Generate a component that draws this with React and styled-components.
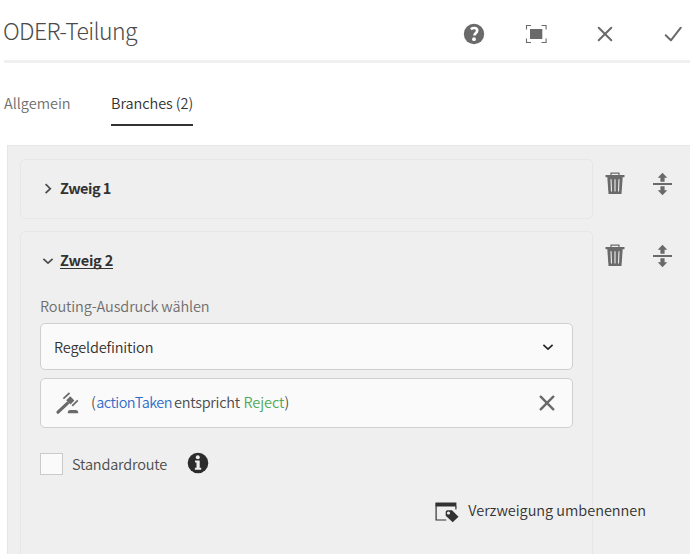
import React from "react";
import styled, { createGlobalStyle } from "styled-components";

const Global = createGlobalStyle`
  *, *::before, *::after { box-sizing: border-box; }
  html, body { margin: 0; background: #fff; overflow: hidden; }
  button { font: inherit; color: inherit; background: none; border: 0; padding: 0; }
  svg { display: block; flex: none; }
`;

const Page = styled.main`
  width: 690px;
  height: 554px;
  overflow: hidden;
  display: flex;
  flex-direction: column;
  font: 350 14.5px/20px "Noto Sans CJK SC", "Open Sans", sans-serif;
  color: #4b4b4b;
`;

/* A single line of text with its own tracking. */
const Label = styled.span`
  display: block;
  white-space: nowrap;
  letter-spacing: ${(p) => p.$track || 0}px;
`;

const Header = styled.header`
  flex: none;
  height: 63px;
  margin-left: 4px;
  border-bottom: 3px solid #f0f0f0;
  display: flex;
  align-items: center;
  justify-content: space-between;
`;

const Title = styled.h1`
  margin: 0 0 0 -1px;
  padding-bottom: 1px;
  font-size: 23px;
  line-height: 32px;
  font-weight: 300;
  color: #4b4b4b;
  white-space: nowrap;
  letter-spacing: -0.58px;
`;

const Actions = styled.div`
  display: flex;
  align-items: center;
  padding: 8px 5px 0 0;
  color: #6a6a6a;
`;

const ActionButton = styled.button`
  width: 24px;
  height: 24px;
  margin-left: ${(p) => p.$gap || 0}px;
`;

const Tabs = styled.nav`
  flex: none;
  display: flex;
  gap: 41px;
  height: 82px;
  padding: 30px 0 0 4px;
`;

const Tab = styled.button`
  width: ${(p) => p.$width}px;
  height: 33px;
  display: flex;
  align-items: flex-start;
  color: ${(p) => (p.$active ? "#323232" : "#6e6e6e")};
  border-bottom: 2px solid ${(p) => (p.$active ? "#323232" : "transparent")};
`;

const Panel = styled.section`
  flex: 1;
  margin-left: 7px;
  padding: 13px 0 0 12px;
  border: solid #e6e6e6;
  border-width: 1px 0 0 1px;
  background: #efefef;
  display: flex;
  flex-direction: column;
  gap: 12px;
`;

const BranchRow = styled.div`
  flex: ${(p) => (p.$open ? "1" : "none")};
  display: flex;
`;

const Card = styled.article`
  width: 573px;
  height: ${(p) => (p.$open ? "360px" : "60px")};
  border: 1px solid #e7e7e7;
  border-radius: 5px;
  padding: 0 19px;
`;

const BranchHeading = styled.button`
  height: ${(p) => (p.$open ? 64 : 58)}px;
  display: flex;
  align-items: center;
  gap: 5px;
  padding: ${(p) => (p.$open ? "0 0 6px 1px" : "0 0 0 1px")};
  font-weight: 700;
  color: #323232;
  ${Label} {
    margin-top: -3px;
    text-decoration: ${(p) => (p.$open ? "underline" : "none")};
    text-underline-offset: 2px;
    text-decoration-thickness: 1px;
    text-decoration-skip-ink: none;
  }
`;

const RowTools = styled.div`
  display: flex;
  align-items: flex-start;
  gap: 28px;
  padding: 13px 0 0 12px;
  color: #6a6a6a;
`;

const FieldCaption = styled.div`
  height: 27px;
  color: #6e6e6e;
`;

const Field = styled.div`
  height: ${(p) => p.$height}px;
  margin-bottom: ${(p) => p.$after}px;
  padding: 0 ${(p) => p.$right}px 0 ${(p) => p.$left}px;
  border: 1px solid #cfcfcf;
  border-radius: 5px;
  background: #fafafa;
  display: flex;
  align-items: center;
  justify-content: space-between;
  color: #323232;
`;

const Rule = styled.div`
  display: flex;
  align-items: center;
  gap: 12px;
  color: #6a6a6a;
`;

const Expression = styled.div`
  display: flex;
  margin-top: -3px;
  color: #4b4b4b;
`;

const Variable = styled(Label)`
  color: #326ec8;
  margin-right: 2px;
`;

const Value = styled(Label)`
  color: #4fa95a;
  margin-left: 3.5px;
`;

const DefaultRoute = styled.div`
  height: 22px;
  display: flex;
  align-items: center;
`;

const Checkbox = styled.span`
  width: 23px;
  height: 22px;
  margin-right: 9px;
  border: 1px solid #cacaca;
  background: #fafafa;
`;

const InfoButton = styled.button`
  margin: -2px 0 0 20px;
  color: #2c2c2c;
`;

const Rename = styled.button`
  margin: 26px -73px 0 auto;
  display: flex;
  align-items: center;
  gap: 9px;
  color: #323232;
  ${Label} {
    margin-top: -4px;
  }
`;

const CardFooter = styled.div`
  display: flex;
`;

const HelpIcon = () => (
  <svg width="24" height="24" viewBox="0 0 24 24">
    <circle cx="12" cy="12" r="10.2" fill="currentColor" />
    <path d="M8.9 7.2Q10.4 6 12.2 6q3 0 3 2.6 0 1.4-1.5 2.6-1.2 1-1.2 2.2" fill="none" stroke="#fff" strokeWidth="2.7" />
    <circle cx="12" cy="17.2" r="1.9" fill="#fff" />
  </svg>
);

const FullscreenIcon = () => (
  <svg width="24" height="24" viewBox="0 0 24 24">
    <path d="M6 7h12.3v10H6z" fill="currentColor" />
    <path d="M2.5 7.5v-4H7M17.5 3.5h4.6v4M22.1 16.5v4h-4.6M7 20.5H2.5v-4" fill="none" stroke="currentColor" strokeWidth="1.1" />
  </svg>
);

const CloseIcon = ({ weight = 2 }) => (
  <svg width="24" height="24" viewBox="0 0 24 24" fill="none" stroke="currentColor" strokeWidth={weight}>
    <path d="M5.7 5.7l12.6 12.6M18.3 5.7L5.7 18.3" strokeLinecap="round" />
  </svg>
);

const CheckIcon = () => (
  <svg width="24" height="24" viewBox="0 0 24 24" fill="none" stroke="currentColor" strokeWidth="2">
    <path d="M4.7 13.3l5.2 5L19.8 5.7" strokeLinecap="round" strokeLinejoin="round" />
  </svg>
);

const ChevronIcon = ({ open, dark }) => (
  <svg width="14" height="14" viewBox="0 0 14 14" fill="none" stroke={dark ? "#252525" : "#4b4b4b"} strokeWidth="1.7">
    <path d={open ? "M2.4 4.9L7 9.2l4.6-4.3" : "M4.6 2.2L9.3 6.7l-4.7 4.5"} />
  </svg>
);

const TrashIcon = () => (
  <svg width="20" height="23" viewBox="0 0 20 23">
    <path d="M6 3.4V1.1h8v2.3" fill="none" stroke="currentColor" strokeWidth="1.2" />
    <path d="M.5 3h19v2.2H.5z" fill="currentColor" />
    <path d="M2.3 5h15.4l-1.2 17h-13z" fill="currentColor" />
    <path d="M6 7.2l.5 12.2M10 7.2v12.2M14 7.2l-.5 12.2" stroke="#efefef" strokeWidth="1.1" />
  </svg>
);

const ReorderIcon = () => (
  <svg width="20" height="24" viewBox="0 0 20 24" fill="currentColor">
    <path d="M0 11h19v2H0z" />
    <path d="M9.5.8l4.8 5h-2.7v3.9H7.4V5.8H4.7zM9.5 23.2l4.8-5h-2.7v-3.9H7.4v3.9H4.7z" />
  </svg>
);

const GavelIcon = () => (
  <svg width="24" height="24" viewBox="0 0 24 24">
    <path d="M3 21.2l9.4-8.9" stroke="currentColor" strokeWidth="3.2" strokeLinecap="round" />
    <path d="M11.2 9.2l4-3.9 4.2 4.2-3.9 3.9z" fill="currentColor" />
    <path d="M8.4 7.6L14.5 2M17.2 14.8l5.6-5.4" stroke="currentColor" strokeWidth="1.7" />
    <path d="M12.8 22.2v-1.3q.3-2 2.2-2h5.8q2 0 2.4 2v1.3z" fill="currentColor" />
  </svg>
);

const InfoIcon = () => (
  <svg width="22" height="22" viewBox="0 0 22 22">
    <circle cx="11" cy="11" r="10.3" fill="currentColor" />
    <circle cx="10.8" cy="5.2" r="2" fill="#efefef" />
    <path d="M8 8.6h4.7v7.2h1.5v2H7.9v-2h1.6v-5.2H8z" fill="#efefef" />
  </svg>
);

const RenameIcon = () => (
  <svg width="24" height="22" viewBox="0 0 24 22">
    <path d="M1.1 2v17h10.2M20.9 5v3.6" fill="none" stroke="currentColor" strokeWidth="1.2" />
    <path d="M.6 1.5h20.8v4H.6z" fill="currentColor" />
    <path d="M10.7 10.5l1.3-1.3h5l6.5 6.5-5.8 5.6-7-6.6z" fill="currentColor" />
    <circle cx="13.5" cy="12" r="1.6" fill="#efefef" />
  </svg>
);

function Tools() {
  return (
    <RowTools>
      <button aria-label="Löschen"><TrashIcon /></button>
      <button aria-label="Verschieben"><ReorderIcon /></button>
    </RowTools>
  );
}

export default function App() {
  return (
    <>
      <Global />
      <Page>
        <Header>
          <Title>ODER-Teilung</Title>
          <Actions>
            <ActionButton aria-label="Hilfe"><HelpIcon /></ActionButton>
            <ActionButton aria-label="Vollbild" $gap={38}><FullscreenIcon /></ActionButton>
            <ActionButton aria-label="Schließen" $gap={45}><CloseIcon /></ActionButton>
            <ActionButton aria-label="Fertig" $gap={44}><CheckIcon /></ActionButton>
          </Actions>
        </Header>
        <Tabs>
          <Tab $width={66}><Label>Allgemein</Label></Tab>
          <Tab $width={82} $active><Label $track={-0.06}>Branches (2)</Label></Tab>
        </Tabs>
        <Panel>
          <BranchRow>
            <Card>
              <BranchHeading>
                <ChevronIcon />
                <Label $track={-0.5}>Zweig 1</Label>
              </BranchHeading>
            </Card>
            <Tools />
          </BranchRow>
          <BranchRow $open>
            <Card $open>
              <BranchHeading $open>
                <ChevronIcon open />
                <Label $track={-0.2}>Zweig 2</Label>
              </BranchHeading>
              <FieldCaption><Label $track={-0.11}>Routing-Ausdruck wählen</Label></FieldCaption>
              <Field $height={47} $after={8} $left={13} $right={17}>
                <Label $track={-0.14}>Regeldefinition</Label>
                <ChevronIcon open dark />
              </Field>
              <Field $height={50} $after={25} $left={14} $right={13}>
                <Rule>
                  <GavelIcon />
                  <Expression>
                    <Label $track={0.4}>(</Label>
                    <Variable $track={-0.52}>actionTaken</Variable>
                    <Label $track={-0.25}>entspricht</Label>
                    <Value $track={-0.05}>Reject</Value>
                    <Label>)</Label>
                  </Expression>
                </Rule>
                <Rule as="button" aria-label="Entfernen"><CloseIcon weight={2.4} /></Rule>
              </Field>
              <DefaultRoute>
                <Checkbox role="checkbox" aria-checked="false" />
                <Label $track={-0.16}>Standardroute</Label>
                <InfoButton aria-label="Info"><InfoIcon /></InfoButton>
              </DefaultRoute>
              <CardFooter>
                <Rename>
                  <RenameIcon />
                  <Label $track={-0.03}>Verzweigung umbenennen</Label>
                </Rename>
              </CardFooter>
            </Card>
            <Tools />
          </BranchRow>
        </Panel>
      </Page>
    </>
  );
}
